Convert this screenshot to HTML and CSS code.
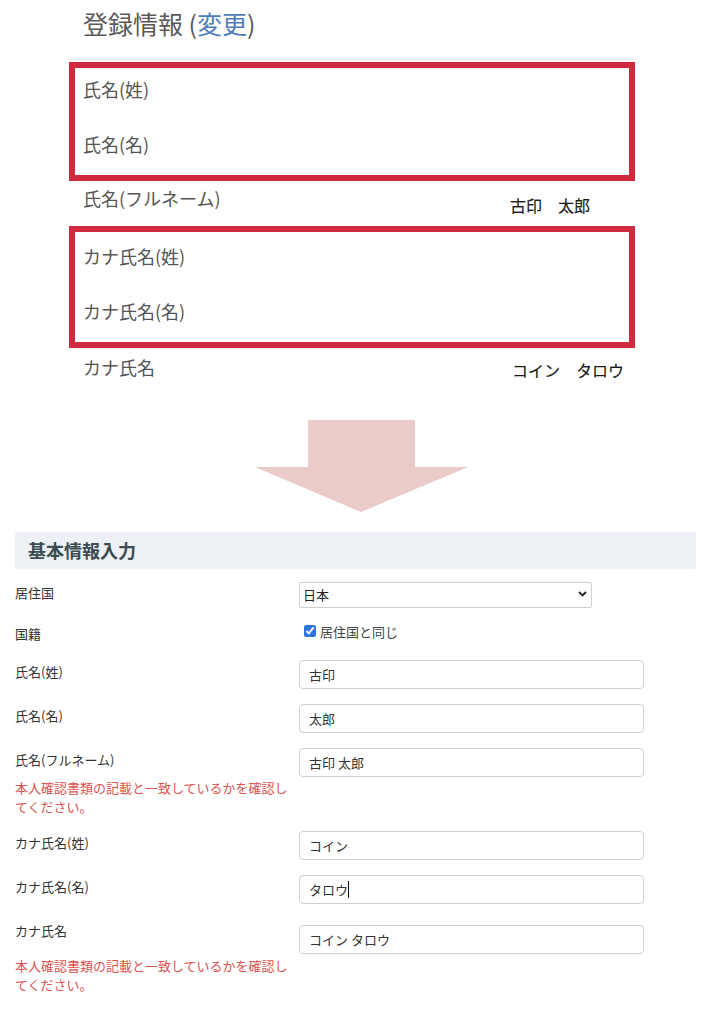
FILE: index.html
```html
<!DOCTYPE html>
<html lang="ja">
<head>
<meta charset="utf-8">
<title>登録情報</title>
<link rel="stylesheet" href="styles.css">
</head>
<body>
<section class="before">
  <h2 class="reg-title">登録情報 (<span class="reg-link">変更</span>)</h2>
  <div class="reg-table">
    <div class="mark-box">
      <div class="reg-row"><span class="reg-label">氏名(姓)</span></div>
      <div class="reg-row"><span class="reg-label">氏名(名)</span></div>
    </div>
    <div class="reg-row reg-row--out">
      <span class="reg-label">氏名(フルネーム)</span>
      <span class="reg-value">古印　太郎</span>
    </div>
    <div class="mark-box mark-box--second">
      <div class="reg-row"><span class="reg-label">カナ氏名(姓)</span></div>
      <div class="reg-row"><span class="reg-label">カナ氏名(名)</span></div>
    </div>
    <div class="reg-row reg-row--out reg-row--last">
      <span class="reg-label">カナ氏名</span>
      <span class="reg-value">コイン　タロウ</span>
    </div>
  </div>
</section>

<div class="arrow-wrap">
  <svg class="arrow" width="213" height="92" viewBox="0 0 213 92">
    <rect x="53" y="0" width="107" height="47" fill="#ebcaca"/>
    <polygon points="0,47 213,47 106,92" fill="#ebcaca"/>
  </svg>
</div>

<section class="after">
  <h3 class="band">基本情報入力</h3>
  <div class="form">
    <div class="frow frow--select">
      <div class="flabel">居住国</div>
      <div class="select-wrap">
        <select class="fselect"><option>日本</option></select>
        <svg class="chev" width="9" height="6" viewBox="0 0 9 6"><path d="M1 1 L4.5 4.5 L8 1" fill="none" stroke="#222" stroke-width="1.8"/></svg>
      </div>
    </div>
    <div class="frow frow--check">
      <div class="flabel">国籍</div>
      <label class="fcheck"><input type="checkbox" checked> 居住国と同じ</label>
    </div>
    <div class="frow">
      <div class="flabel">氏名(姓)</div>
      <input class="finput" type="text" value="古印">
    </div>
    <div class="frow">
      <div class="flabel">氏名(名)</div>
      <input class="finput" type="text" value="太郎">
    </div>
    <div class="frow">
      <div class="fcol">
        <div class="flabel">氏名(フルネーム)</div>
        <p class="fnote">本人確認書類の記載と一致しているかを確認してください。</p>
      </div>
      <input class="finput" type="text" value="古印 太郎">
    </div>
    <div class="frow">
      <div class="flabel">カナ氏名(姓)</div>
      <input class="finput" type="text" value="コイン">
    </div>
    <div class="frow">
      <div class="flabel">カナ氏名(名)</div>
      <div class="input-wrap">
        <input class="finput" type="text" value="タロウ">
        <span class="caret"></span>
      </div>
    </div>
    <div class="frow">
      <div class="fcol">
        <div class="flabel">カナ氏名</div>
        <p class="fnote fnote--far">本人確認書類の記載と一致しているかを確認してください。</p>
      </div>
      <input class="finput finput--low" type="text" value="コイン タロウ">
    </div>
  </div>
</section>
</body>
</html>
```

FILE: styles.css
```css
* { box-sizing: border-box; }

body {
  margin: 0;
  background: #fff;
  font-family: "Noto Sans CJK JP", "Noto Sans", sans-serif;
  color: #333;
}

/* ---------- before ---------- */
.before {
  padding-top: 8px;
}

.reg-title {
  margin: 0 0 21px 83px;
  font-size: 25px;
  line-height: 30px;
  font-weight: 400;
  color: #595959;
}

.reg-link {
  color: #4f7dbb;
}

.reg-table {
  margin-left: 69px;
  width: 566px;
  border-top: 1px solid #e6e6e6;
  padding-top: 2px;
}

.mark-box {
  border: 6px solid #cf2a3d;
  padding: 9px 8px 19px;
  display: flex;
  flex-direction: column;
  gap: 31px;
}

.mark-box--second {
  padding: 12px 8px 19px;
}

.reg-row {
  display: grid;
  grid-template-columns: 427px 1fr;
  align-items: start;
  line-height: 24px;
}

.reg-row--out {
  padding: 5px 14px 9px;
}

.reg-row--last {
  padding-top: 7px;
  padding-bottom: 8px;
}

.reg-label {
  font-size: 18px;
  color: #555;
}

.reg-value {
  font-size: 16px;
  font-weight: 400;
  color: #1a1a1a;
  -webkit-text-stroke: 0.15px #1a1a1a;
  white-space: nowrap;
  margin-top: 7px;
}

.reg-row--last .reg-value {
  margin-top: 3px;
  margin-left: 2px;
}

/* ---------- arrow ---------- */
.arrow-wrap {
  margin-top: 30px;
  padding-left: 255px;
  line-height: 0;
}

/* ---------- after ---------- */
.after {
  margin: 20px 19px 0 15px;
}

.band {
  margin: 0;
  height: 37px;
  padding-left: 13px;
  background: #edf1f5;
  border-radius: 3px;
  font-size: 18px;
  font-weight: 700;
  line-height: 37px;
  color: #3a4b51;
}

.form {
  margin-top: 12px;
}

.frow {
  display: grid;
  grid-template-columns: 284px 345px;
  align-items: start;
  margin-bottom: 15px;
}

.frow--select { margin-bottom: 14px; }
.frow--check { margin-bottom: 17px; }

.flabel {
  font-size: 13px;
  line-height: 19px;
  padding-top: 2px;
  color: #333;
}

.fnote {
  margin: 9px 0 0;
  font-size: 13px;
  line-height: 19px;
  color: #d9534f;
  padding-right: 4px;
}

.fnote--far {
  margin-top: 16px;
}

.select-wrap {
  position: relative;
  width: 293px;
}

.fselect {
  appearance: none;
  -webkit-appearance: none;
  width: 293px;
  height: 26px;
  border: 1px solid #cfcfcf;
  border-radius: 2px;
  background: #fff;
  padding: 0 3px;
  font-family: inherit;
  font-size: 13px;
  color: #222;
}

.chev {
  position: absolute;
  right: 5px;
  top: 10px;
}

.fcheck {
  display: flex;
  align-items: center;
  gap: 4px;
  padding-left: 5px;
  font-size: 13px;
  line-height: 19px;
  color: #444;
}

.fcheck input {
  margin: 0;
  width: 12px;
  height: 12px;
  accent-color: #2f74dc;
}

.input-wrap {
  position: relative;
}

.finput {
  width: 345px;
  height: 29px;
  border: 1px solid #cfcfcf;
  border-radius: 4px;
  padding: 0 9px;
  font-family: inherit;
  font-size: 13px;
  color: #333;
  background: #fff;
  display: block;
}

.finput--low {
  margin-top: 6px;
}

.caret {
  position: absolute;
  left: 49px;
  top: 6px;
  width: 1px;
  height: 17px;
  background: #111;
}
```
